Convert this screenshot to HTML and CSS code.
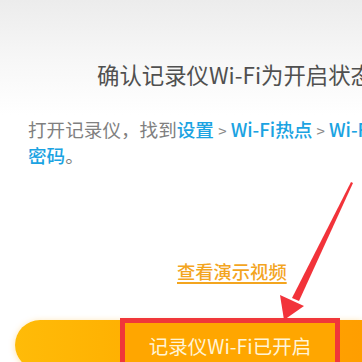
FILE: index.html
```html
<!DOCTYPE html>
<html lang="zh-CN">
<head>
<meta charset="utf-8">
<link rel="stylesheet" href="styles.css">
</head>
<body>
<div class="page">
  <div class="title">确认记录仪Wi-Fi为开启状态</div>
  <div class="desc">
    <div class="line">打开记录仪，找到<span class="link">设置</span> <span class="sep">&gt;</span> <span class="link">Wi-Fi热点</span> <span class="sep">&gt;</span> <span class="link">Wi-Fi</span></div>
    <div class="line"><span class="link">密码</span>。</div>
  </div>
  <div class="demo"><span class="demo-link">查看演示视频</span></div>
  <div class="btn-row">
    <div class="btn">
      <div class="btn-label">记录仪Wi-Fi已开启</div>
    </div>
  </div>
</div>
<svg class="arrow" width="362" height="362" viewBox="0 0 362 362">
  <polygon points="351,182 353,183 299,301 292,298" fill="#f2333a"/>
  <polygon points="284,320 280,295 304,306" fill="#f2333a"/>
</svg>
</body>
</html>
```
FILE: styles.css
```css
html, body {
  margin: 0;
  padding: 0;
}
body {
  width: 362px;
  height: 362px;
  overflow: hidden;
  position: relative;
  background: linear-gradient(#ececec 0, #f7f7f7 60px, #ffffff 115px);
  font-family: "Noto Sans CJK SC", "Noto Sans", sans-serif;
}
.page {
  display: flex;
  flex-direction: column;
  height: 362px;
}
.title {
  padding: 59px 0 0 97px;
  font-size: 22.4px;
  line-height: 30px;
  color: #505050;
  white-space: nowrap;
}
.desc {
  margin-top: 28px;
  padding-left: 28px;
  font-size: 18.6px;
  line-height: 24px;
  color: #808080;
  white-space: nowrap;
}
.link {
  color: #1ba3e2;
  font-weight: 500;
}
.sep {
  color: #8a8a8a;
  font-size: 15px;
}
.demo {
  margin-top: 92px;
  padding-left: 177px;
  font-size: 18.3px;
  line-height: 24px;
}
.demo-link {
  color: #f3a51f;
  font-weight: 500;
  text-decoration: underline;
  text-underline-offset: 3px;
  text-decoration-thickness: 1.5px;
}
.btn-row {
  margin-top: 37px;
  padding-left: 15px;
}
.btn {
  height: 50px;
  border-radius: 25px 0 0 25px;
  background: linear-gradient(90deg, #ffbb08 0, #ffae00 40%, #ff9e00 100%);
  box-shadow: 0 1px 6px rgba(255, 170, 0, 0.35);
  display: flex;
  padding-left: 105px;
}
.btn-label {
  margin-top: -2px;
  width: 210px;
  height: 50px;
  border: 5px solid #f0373a;
  background: #ffa600;
  color: #fff4d6;
  font-size: 19.5px;
  line-height: 46px;
  text-align: center;
  white-space: nowrap;
}
.arrow {
  position: absolute;
  left: 0;
  top: 0;
  pointer-events: none;
}
```
